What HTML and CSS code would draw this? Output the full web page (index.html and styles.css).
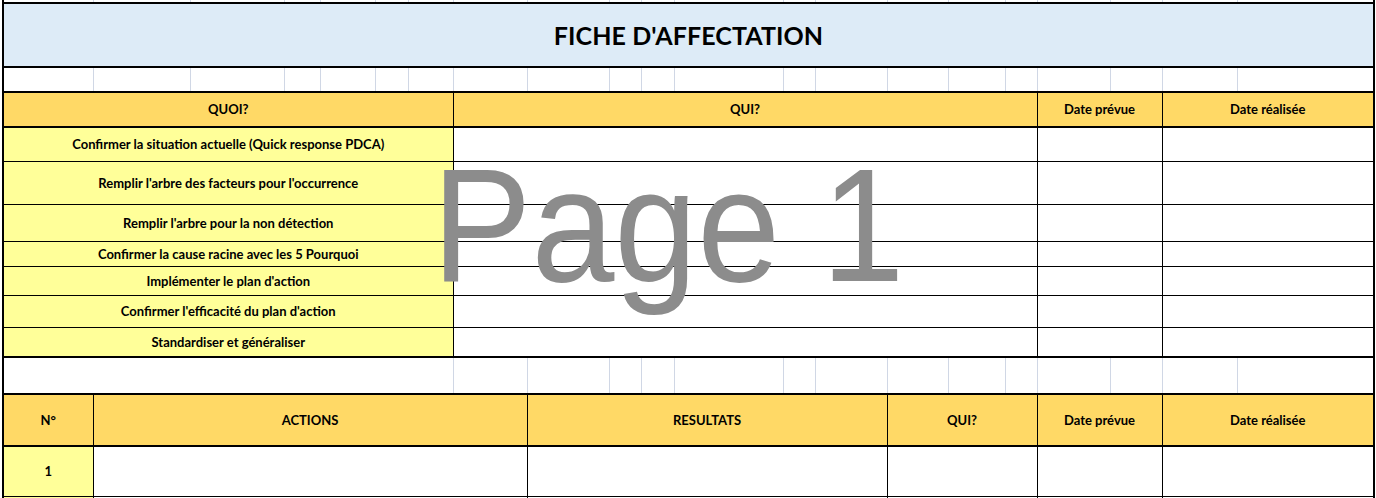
FILE: index.html
```html
<!DOCTYPE html>
<html lang="fr">
<head>
<meta charset="utf-8">
<title>Fiche d'affectation</title>
<link rel="stylesheet" href="styles.css">
</head>
<body>
<div class="sheet">
<table class="grid">
<colgroup>
<col style="width:90px"><col style="width:97px"><col style="width:94px"><col style="width:36px"><col style="width:55px"><col style="width:33px"><col style="width:45px"><col style="width:74px"><col style="width:82px"><col style="width:32px"><col style="width:33px"><col style="width:109px"><col style="width:32px"><col style="width:72px"><col style="width:61px"><col style="width:57px"><col style="width:32px"><col style="width:73px"><col style="width:52px"><col style="width:75px"><col style="width:137px">
</colgroup>
<tr class="stub"><td></td><td></td><td></td><td></td><td></td><td></td><td></td><td></td><td></td><td></td><td></td><td></td><td></td><td></td><td></td><td></td><td></td><td></td><td></td><td></td><td></td></tr>
<tr class="r-title"><td colspan="21" class="title">FICHE D'AFFECTATION</td></tr>
<tr class="gap"><td></td><td></td><td></td><td></td><td></td><td></td><td></td><td></td><td></td><td></td><td></td><td></td><td></td><td></td><td></td><td></td><td></td><td></td><td></td><td></td><td></td></tr>
<tr class="head h1"><td colspan="7">QUOI?</td><td colspan="10">QUI?</td><td colspan="2">Date prévue</td><td colspan="2">Date réalisée</td></tr>
<tr class="task r1"><td colspan="7" class="what">Confirmer la situation actuelle (Quick response PDCA)</td><td colspan="10"></td><td colspan="2"></td><td colspan="2"></td></tr>
<tr class="task r2"><td colspan="7" class="what">Remplir l'arbre des facteurs pour l'occurrence</td><td colspan="10"></td><td colspan="2"></td><td colspan="2"></td></tr>
<tr class="task r3"><td colspan="7" class="what">Remplir l'arbre pour la non détection</td><td colspan="10"></td><td colspan="2"></td><td colspan="2"></td></tr>
<tr class="task r4"><td colspan="7" class="what">Confirmer la cause racine avec les 5 Pourquoi</td><td colspan="10"></td><td colspan="2"></td><td colspan="2"></td></tr>
<tr class="task r5"><td colspan="7" class="what">Implémenter le plan d'action</td><td colspan="10"></td><td colspan="2"></td><td colspan="2"></td></tr>
<tr class="task r6"><td colspan="7" class="what">Confirmer l'efficacité du plan d'action</td><td colspan="10"></td><td colspan="2"></td><td colspan="2"></td></tr>
<tr class="task r7 last"><td colspan="7" class="what">Standardiser et généraliser</td><td colspan="10"></td><td colspan="2"></td><td colspan="2"></td></tr>
<tr class="gap blank"><td colspan="7"></td><td></td><td></td><td></td><td></td><td></td><td></td><td></td><td></td><td></td><td></td><td></td><td></td><td></td><td></td></tr>
<tr class="head h2"><td>N°</td><td colspan="7">ACTIONS</td><td colspan="6">RESULTATS</td><td colspan="3">QUI?</td><td colspan="2">Date prévue</td><td colspan="2">Date réalisée</td></tr>
<tr class="data"><td class="what">1</td><td colspan="7"></td><td colspan="6"></td><td colspan="3"></td><td colspan="2"></td><td colspan="2"></td></tr>
<tr class="data"><td class="what"></td><td colspan="7"></td><td colspan="6"></td><td colspan="3"></td><td colspan="2"></td><td colspan="2"></td></tr>
</table>
<div class="watermark">Page 1</div>
</div>
</body>
</html>
```
FILE: styles.css
```css
html, body {
  margin: 0;
  padding: 0;
  background: #fff;
  overflow: hidden;
}
body {
  width: 1376px;
  height: 498px;
}
.sheet {
  position: relative;
  width: 1376px;
  height: 498px;
  overflow: hidden;
  padding-left: 2px;
  box-sizing: border-box;
}
.grid {
  border-collapse: collapse;
  table-layout: fixed;
  width: 1373px;
  font-family: "Lato", "Liberation Sans", sans-serif;
  font-weight: 700;
  font-size: 13px;
  color: #000;
}
.grid td {
  padding: 0;
  border: 1px solid #000;
  text-align: center;
  vertical-align: middle;
  white-space: nowrap;
  overflow: hidden;
  line-height: 1;
}
.grid tr > td:first-child {
  border-left: 2px solid #000;
}
.grid tr > td:last-child {
  border-right: 2px solid #000;
}

/* grid lines of empty spreadsheet rows */
.stub td,
.gap td {
  border-color: #d0d7e5;
  border-top: none;
  border-bottom: none;
}
.stub td {
  height: 2px;
  line-height: 0;
}
.stub td:first-child {
  border-left: 1px solid #d0d7e5;
}
.stub td:last-child {
  border-right: 1px solid #000;
}

.r-title td.title {
  height: 62px;
  border: 2px solid #000;
  background: #ddebf7;
  font-size: 25px;
  letter-spacing: 0.1px;
}
.gap td { height: 23px; }
.blank td { height: 35px; }

.head td {
  background: #ffd966;
  border-top: 2px solid #000;
  border-bottom: 2px solid #000;
}
.h1 td { height: 33px; }
.h2 td { height: 50px; }

.task td.what,
.data td.what {
  background: #ffff99;
}
.r1 td { height: 33px; }
.r2 td { height: 42px; }
.r3 td { height: 36px; }
.r4 td { height: 24px; }
.r5 td { height: 28px; }
.r6 td { height: 31px; }
.r7 td { height: 28px; }
.last td { border-bottom: 2px solid #000; }
.data td { height: 49px; }

.watermark {
  position: absolute;
  left: 432px;
  top: 144px;
  font-family: "Liberation Sans", Arial, sans-serif;
  font-size: 162px;
  line-height: 1;
  color: #8c8c8c;
  white-space: nowrap;
  pointer-events: none;
  transform: scaleX(0.92);
  transform-origin: left top;
}
```
